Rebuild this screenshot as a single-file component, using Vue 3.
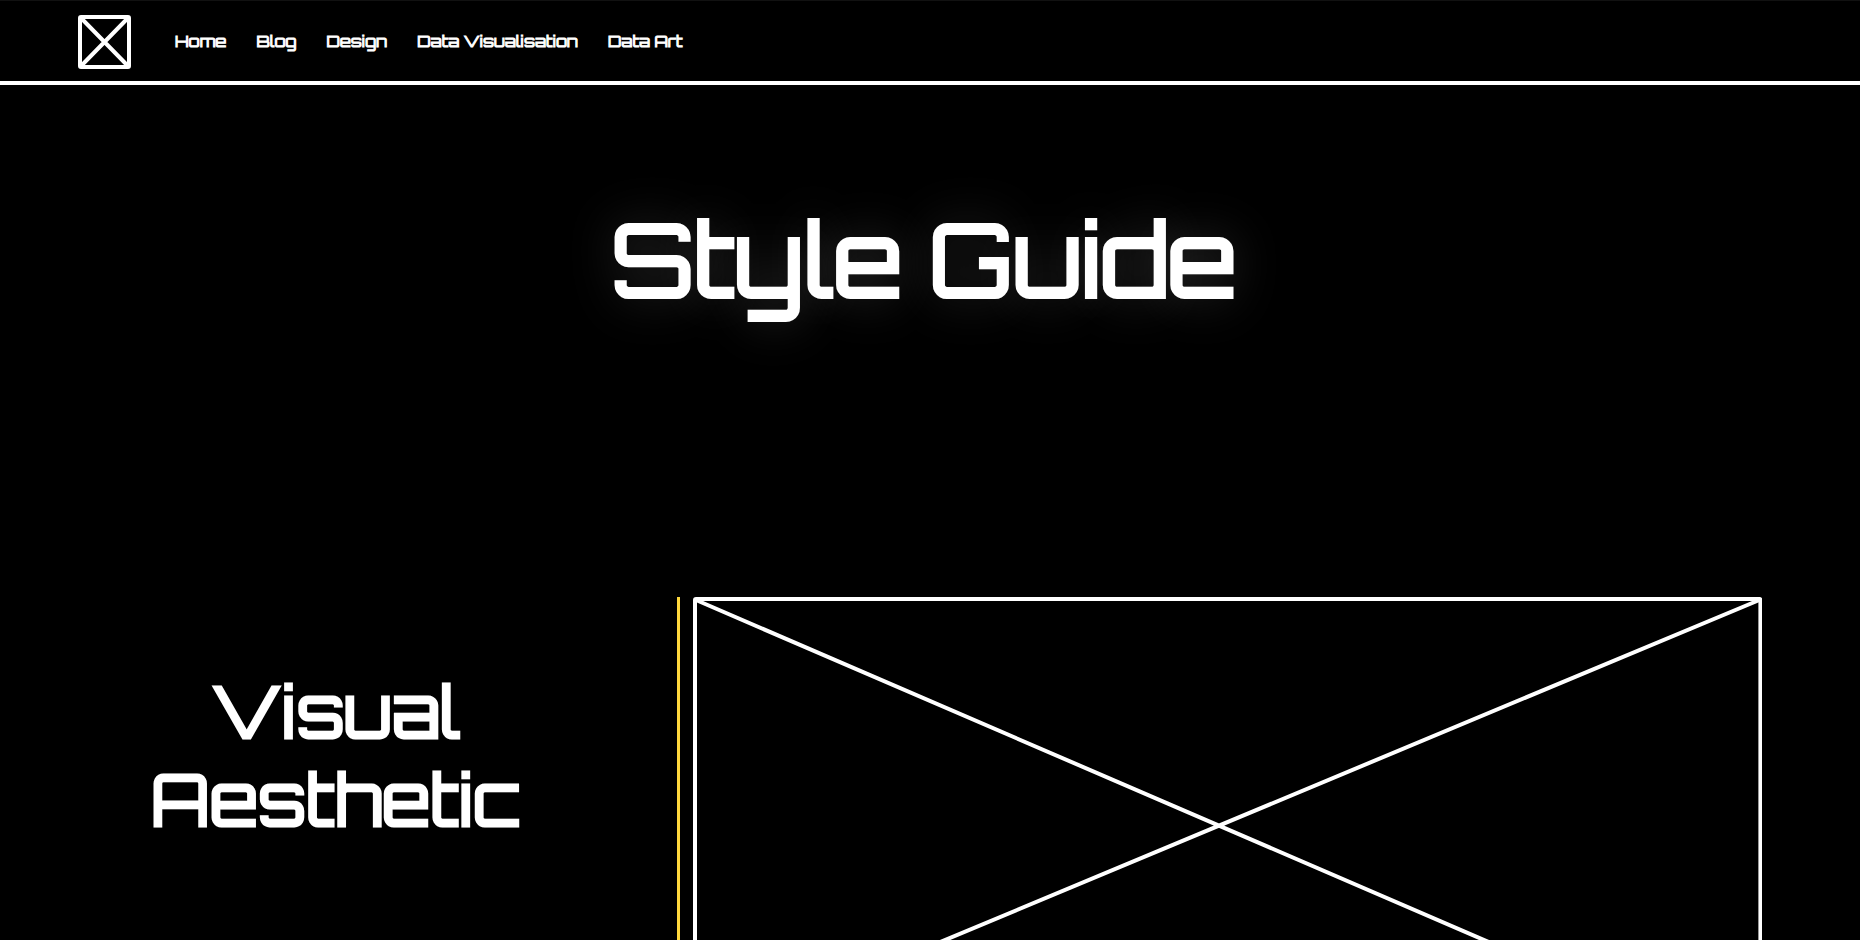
<script setup>
const links = ['Home', 'Blog', 'Design', 'Data Visualisation', 'Data Art']
</script>

<template>
  <div class="page">
    <header class="header">
      <a class="logo" href="#" aria-label="Home page">
        <svg viewBox="0 0 53 54" width="53" height="54" aria-hidden="true">
          <path d="M4 4 49 50M49 4 4 50" />
          <rect x="2" y="2" width="49" height="50" rx="1" />
        </svg>
      </a>
      <nav class="nav" aria-label="Main">
        <a v-for="link in links" :key="link" href="#">{{ link }}</a>
      </nav>
    </header>
    <main>
      <h1 class="title">Style Guide</h1>
      <section class="row">
        <h2 class="subtitle">Visual<br />Aesthetic</h2>
        <div class="media">
          <svg class="placeholder" viewBox="0 0 1069 450" preserveAspectRatio="none" role="img" aria-label="Placeholder image">
            <rect x="2" y="2" width="1065" height="446" rx="1" />
            <path d="M3 3 1034 448M1066 3 3 447" />
          </svg>
        </div>
      </section>
    </main>
  </div>
</template>

<style>
body {
  margin: 0;
  background: #000;
}
</style>

<style scoped>
.page {
  height: 100vh;
  overflow: hidden;
  background: #000;
  color: #fff;
  font-family: Orbitron, "DejaVu Sans", sans-serif;
}

.header {
  display: flex;
  align-items: center;
  gap: 44px;
  height: 80px;
  padding: 0 78px;
  border-top: 1px solid #111;
  border-bottom: 4px solid #fff;
}

.logo {
  display: flex;
  padding-top: 2px;
}

svg {
  fill: none;
  stroke: #fff;
  stroke-width: 4px;
  stroke-linejoin: round;
}

.nav {
  display: flex;
  gap: 30px;
}

.nav a {
  color: #fff;
  font-size: 16px;
  line-height: 24px;
  font-weight: 400;
  text-decoration: none;
  white-space: nowrap;
  -webkit-text-stroke: 1px #fff;
}

.title {
  margin: 0;
  padding: 110px 12px 0 0;
  font-size: 100px;
  line-height: 128px;
  font-weight: 400;
  text-align: center;
  -webkit-text-stroke: 4px #fff;
  text-shadow: 0 0 48px rgba(255, 255, 255, 0.25);
}

.row {
  display: grid;
  grid-template-columns: 38.4% 1fr;
  margin: 274px 98px 0 0;
}

.subtitle {
  margin: 0;
  padding: 70px 4px 0 0;
  font-size: 70px;
  line-height: 88px;
  font-weight: 400;
  text-align: center;
  -webkit-text-stroke: 3px #fff;
}

.media {
  padding-left: 13px;
  border-left: 3px solid #ffd83d;
}

.placeholder {
  display: block;
  width: 100%;
  height: 450px;
}
</style>
